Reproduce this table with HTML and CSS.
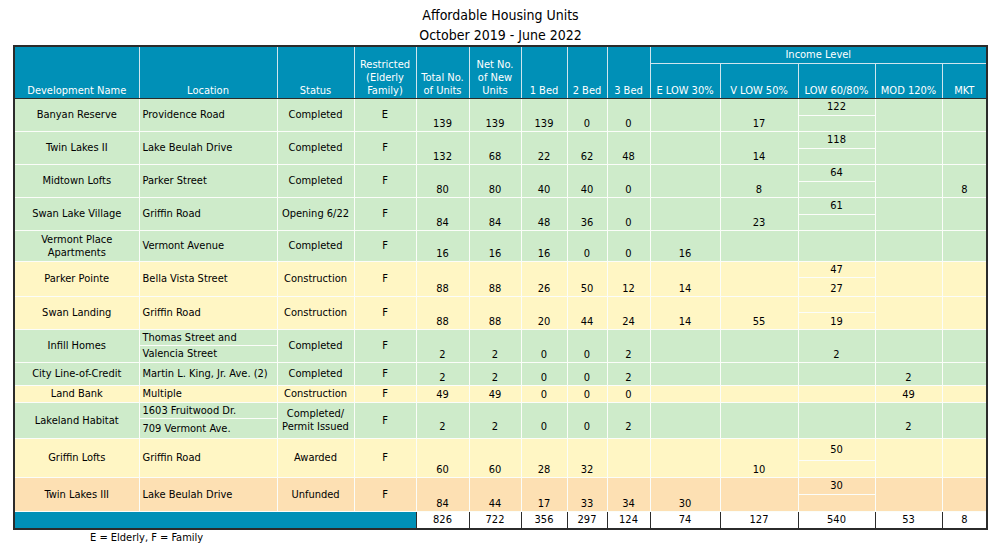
FILE: index.html
```html
<!DOCTYPE html>
<html>
<head>
<meta charset="utf-8">
<link rel="stylesheet" href="styles.css">
</head>
<body>
<div class="wrap">
  <div class="title">Affordable Housing Units<br>October 2019 - June 2022</div>
  <table class="grid">
    <colgroup>
      <col style="width:125px"><col style="width:138px"><col style="width:77px"><col style="width:62px">
      <col style="width:53px"><col style="width:52px"><col style="width:46px"><col style="width:40px"><col style="width:43px">
      <col style="width:70px"><col style="width:78px"><col style="width:77px"><col style="width:67px"><col style="width:45px">
    </colgroup>
    <thead>
      <tr class="hr1">
        <th rowspan="2" class="hb">Development Name</th>
        <th rowspan="2" class="hb">Location</th>
        <th rowspan="2" class="hb">Status</th>
        <th rowspan="2" class="hb">Restricted<br>(Elderly<br>Family)</th>
        <th rowspan="2" class="hb">Total No.<br>of Units</th>
        <th rowspan="2" class="hb">Net No.<br>of New<br>Units</th>
        <th rowspan="2" class="hb">1 Bed</th>
        <th rowspan="2" class="hb">2 Bed</th>
        <th rowspan="2" class="hb">3 Bed</th>
        <th colspan="5" class="inc">Income Level</th>
      </tr>
      <tr class="hr2">
        <th class="hb">E LOW 30%</th>
        <th class="hb">V LOW 50%</th>
        <th class="hb">LOW 60/80%</th>
        <th class="hb">MOD 120%</th>
        <th class="hb">MKT</th>
      </tr>
    </thead>
    <tbody>
      <tr class="g h17">
        <td rowspan="2" class="nm">Banyan Reserve</td><td rowspan="2" class="loc">Providence Road</td><td rowspan="2" class="st">Completed</td><td rowspan="2" class="st">E</td>
        <td rowspan="2" class="n">139</td><td rowspan="2" class="n">139</td><td rowspan="2" class="n">139</td><td rowspan="2" class="n">0</td><td rowspan="2" class="n">0</td>
        <td rowspan="2" class="n"></td><td rowspan="2" class="n">17</td><td class="sub">122</td><td rowspan="2" class="n"></td><td rowspan="2" class="n"></td>
      </tr>
      <tr class="g h16"><td class="sub"></td></tr>

      <tr class="g h17">
        <td rowspan="2" class="nm">Twin Lakes II</td><td rowspan="2" class="loc">Lake Beulah Drive</td><td rowspan="2" class="st">Completed</td><td rowspan="2" class="st">F</td>
        <td rowspan="2" class="n">132</td><td rowspan="2" class="n">68</td><td rowspan="2" class="n">22</td><td rowspan="2" class="n">62</td><td rowspan="2" class="n">48</td>
        <td rowspan="2" class="n"></td><td rowspan="2" class="n">14</td><td class="sub">118</td><td rowspan="2" class="n"></td><td rowspan="2" class="n"></td>
      </tr>
      <tr class="g h16"><td class="sub"></td></tr>

      <tr class="g h17">
        <td rowspan="2" class="nm">Midtown Lofts</td><td rowspan="2" class="loc">Parker Street</td><td rowspan="2" class="st">Completed</td><td rowspan="2" class="st">F</td>
        <td rowspan="2" class="n">80</td><td rowspan="2" class="n">80</td><td rowspan="2" class="n">40</td><td rowspan="2" class="n">40</td><td rowspan="2" class="n">0</td>
        <td rowspan="2" class="n"></td><td rowspan="2" class="n">8</td><td class="sub">64</td><td rowspan="2" class="n"></td><td rowspan="2" class="n">8</td>
      </tr>
      <tr class="g h16"><td class="sub"></td></tr>

      <tr class="g h17">
        <td rowspan="2" class="nm">Swan Lake Village</td><td rowspan="2" class="loc">Griffin Road</td><td rowspan="2" class="st">Opening 6/22</td><td rowspan="2" class="st">F</td>
        <td rowspan="2" class="n">84</td><td rowspan="2" class="n">84</td><td rowspan="2" class="n">48</td><td rowspan="2" class="n">36</td><td rowspan="2" class="n">0</td>
        <td rowspan="2" class="n"></td><td rowspan="2" class="n">23</td><td class="sub">61</td><td rowspan="2" class="n"></td><td rowspan="2" class="n"></td>
      </tr>
      <tr class="g h16"><td class="sub"></td></tr>

      <tr class="g h31">
        <td class="nm">Vermont Place<br>Apartments</td><td class="loc">Vermont Avenue</td><td class="st">Completed</td><td class="st">F</td>
        <td class="n">16</td><td class="n">16</td><td class="n">16</td><td class="n">0</td><td class="n">0</td>
        <td class="n">16</td><td class="n"></td><td class="n"></td><td class="n"></td><td class="n"></td>
      </tr>

      <tr class="y h16">
        <td rowspan="2" class="nm">Parker Pointe</td><td rowspan="2" class="loc">Bella Vista Street</td><td rowspan="2" class="st">Construction</td><td rowspan="2" class="st">F</td>
        <td rowspan="2" class="n">88</td><td rowspan="2" class="n">88</td><td rowspan="2" class="n">26</td><td rowspan="2" class="n">50</td><td rowspan="2" class="n">12</td>
        <td rowspan="2" class="n">14</td><td rowspan="2" class="n"></td><td class="sub">47</td><td rowspan="2" class="n"></td><td rowspan="2" class="n"></td>
      </tr>
      <tr class="y h19"><td class="n">27</td></tr>

      <tr class="y h16">
        <td rowspan="2" class="nm">Swan Landing</td><td rowspan="2" class="loc">Griffin Road</td><td rowspan="2" class="st">Construction</td><td rowspan="2" class="st">F</td>
        <td rowspan="2" class="n">88</td><td rowspan="2" class="n">88</td><td rowspan="2" class="n">20</td><td rowspan="2" class="n">44</td><td rowspan="2" class="n">24</td>
        <td rowspan="2" class="n">14</td><td rowspan="2" class="n">55</td><td class="sub"></td><td rowspan="2" class="n"></td><td rowspan="2" class="n"></td>
      </tr>
      <tr class="y h17"><td class="n">19</td></tr>

      <tr class="g h16">
        <td rowspan="2" class="nm">Infill Homes</td><td class="loc">Thomas Street and</td><td rowspan="2" class="st">Completed</td><td rowspan="2" class="st">F</td>
        <td rowspan="2" class="n">2</td><td rowspan="2" class="n">2</td><td rowspan="2" class="n">0</td><td rowspan="2" class="n">0</td><td rowspan="2" class="n">2</td>
        <td rowspan="2" class="n"></td><td rowspan="2" class="n"></td><td rowspan="2" class="n">2</td><td rowspan="2" class="n"></td><td rowspan="2" class="n"></td>
      </tr>
      <tr class="g h17"><td class="loc">Valencia Street</td></tr>

      <tr class="g h23">
        <td class="nm">City Line-of-Credit</td><td class="loc">Martin L. King, Jr. Ave. (2)</td><td class="st">Completed</td><td class="st">F</td>
        <td class="n">2</td><td class="n">2</td><td class="n">0</td><td class="n">0</td><td class="n">2</td>
        <td class="n"></td><td class="n"></td><td class="n"></td><td class="n">2</td><td class="n"></td>
      </tr>

      <tr class="y h17">
        <td class="nm">Land Bank</td><td class="loc">Multiple</td><td class="st">Construction</td><td class="st">F</td>
        <td class="n">49</td><td class="n">49</td><td class="n">0</td><td class="n">0</td><td class="n">0</td>
        <td class="n"></td><td class="n"></td><td class="n"></td><td class="n">49</td><td class="n"></td>
      </tr>

      <tr class="g h16">
        <td rowspan="2" class="nm">Lakeland Habitat</td><td class="loc">1603 Fruitwood Dr.</td><td rowspan="2" class="st">Completed/<br>Permit Issued</td><td rowspan="2" class="st">F</td>
        <td rowspan="2" class="n pb">2</td><td rowspan="2" class="n pb">2</td><td rowspan="2" class="n pb">0</td><td rowspan="2" class="n pb">0</td><td rowspan="2" class="n pb">2</td>
        <td rowspan="2" class="n"></td><td rowspan="2" class="n"></td><td rowspan="2" class="n"></td><td rowspan="2" class="n pb">2</td><td rowspan="2" class="n"></td>
      </tr>
      <tr class="g h20"><td class="loc">709 Vermont Ave.</td></tr>

      <tr class="y h22">
        <td rowspan="2" class="nm">Griffin Lofts</td><td rowspan="2" class="loc">Griffin Road</td><td rowspan="2" class="st">Awarded</td><td rowspan="2" class="st">F</td>
        <td rowspan="2" class="n">60</td><td rowspan="2" class="n">60</td><td rowspan="2" class="n">28</td><td rowspan="2" class="n">32</td><td rowspan="2" class="n"></td>
        <td rowspan="2" class="n"></td><td rowspan="2" class="n">10</td><td class="sub">50</td><td rowspan="2" class="n"></td><td rowspan="2" class="n"></td>
      </tr>
      <tr class="y h17"><td class="sub"></td></tr>

      <tr class="o h17">
        <td rowspan="2" class="nm">Twin Lakes III</td><td rowspan="2" class="loc">Lake Beulah Drive</td><td rowspan="2" class="st">Unfunded</td><td rowspan="2" class="st">F</td>
        <td rowspan="2" class="n">84</td><td rowspan="2" class="n">44</td><td rowspan="2" class="n">17</td><td rowspan="2" class="n">33</td><td rowspan="2" class="n">34</td>
        <td rowspan="2" class="n">30</td><td rowspan="2" class="n"></td><td class="sub">30</td><td rowspan="2" class="n"></td><td rowspan="2" class="n"></td>
      </tr>
      <tr class="o h17"><td class="sub"></td></tr>

      <tr class="tot">
        <td colspan="4" class="totlabel"></td>
        <td>826</td><td>722</td><td>356</td><td>297</td><td>124</td>
        <td>74</td><td>127</td><td>540</td><td>53</td><td>8</td>
      </tr>
    </tbody>
  </table>
  <div class="legend">E = Elderly, F = Family</div>
</div>
</body>
</html>
```

FILE: styles.css
```css
html, body {
  margin: 0;
  padding: 0;
  background: #ffffff;
}

body {
  font-family: "DejaVu Sans Condensed", "DejaVu Sans", sans-serif;
  font-size: 11px;
  color: #000000;
}

.wrap {
  width: 975px;
  margin-left: 13px;
}

.title {
  padding-top: 5px;
  text-align: center;
  font-size: 14px;
  line-height: 20px;
  color: #000;
}

.grid {
  border-collapse: collapse;
  table-layout: fixed;
  width: 975px;
  border: 2px solid #2b2b2b;
}

.grid th {
  background: #0090b7;
  color: #ffffff;
  font-weight: normal;
  font-size: 11px;
  line-height: 13px;
  border: 1px solid #cfe5ee;
  padding: 0 1px 1px;
  text-align: center;
}

.grid th.hb {
  vertical-align: bottom;
  border-bottom: 1px solid #2b2b2b;
}

.hr1 { height: 17px; }
.hr2 { height: 35px; }

.grid th.inc {
  vertical-align: middle;
  padding: 0;
}

.grid td {
  border: 1px solid #fbfdf9;
  padding: 0 2px;
  line-height: 13px;
  white-space: nowrap;
  overflow: hidden;
}

.g td { background: #ceebca; }
.y td { background: #fff6c4; }
.o td { background: #fde0b3; }

.grid td.nm { text-align: center; vertical-align: middle; }
.grid td.loc { text-align: left; vertical-align: middle; padding-left: 3px; }
.grid td.st { text-align: center; vertical-align: middle; }
.grid td.n { text-align: center; vertical-align: bottom; padding-bottom: 1px; }
.grid td.pb { padding-bottom: 5px; }
.grid td.sub { text-align: center; vertical-align: middle; }

.h16 { height: 16px; }
.h17 { height: 17px; }
.h18 { height: 18px; }
.h19 { height: 19px; }
.h20 { height: 20px; }
.h22 { height: 22px; }
.h23 { height: 23px; }
.h31 { height: 31px; }

.tot { height: 18px; }

.tot td {
  background: #ffffff;
  border: 1px solid #2b2b2b;
  text-align: center;
  vertical-align: middle;
}

.tot td.totlabel {
  background: #0090b7;
  border-right: 1px solid #2b2b2b;
}

.legend {
  padding-left: 77px;
  line-height: 16px;
  font-size: 11px;
  color: #000;
}
```
